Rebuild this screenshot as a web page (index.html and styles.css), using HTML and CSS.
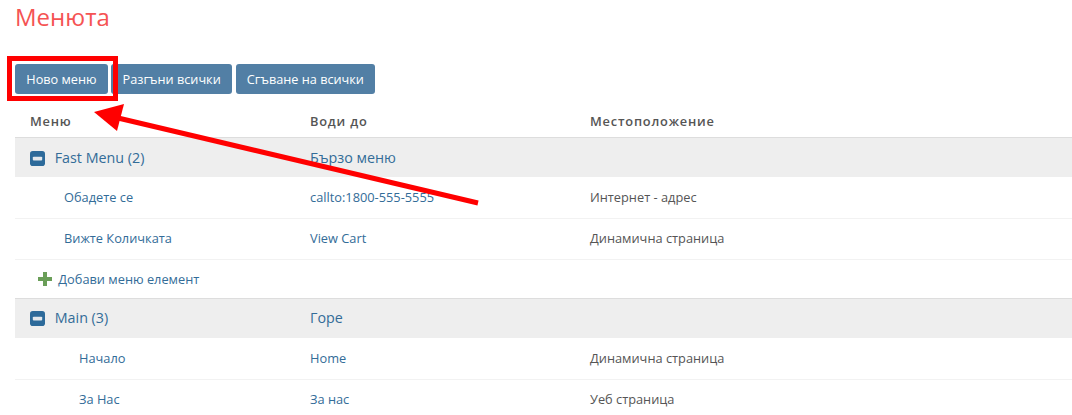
FILE: index.html
```html
<!DOCTYPE html>
<html lang="en">
<head>
    <meta charset="UTF-8">
    <title>Менюта</title>
    <link rel="stylesheet" href="styles.css">
</head>
<body>

    <div class="page">
        <h1>Менюта</h1>

        <div class="buttons">
            <a class="btn">Ново меню</a>
            <a class="btn">Разгъни всички</a>
            <a class="btn">Сгъване на всички</a>
        </div>

        <table class="menus">
            <thead>
                <tr>
                    <th class="col-name">Меню</th>
                    <th class="col-link">Води до</th>
                    <th>Местоположение</th>
                </tr>
            </thead>
            <tbody>
                <tr class="group">
                    <td>
                        <svg class="toggle" viewBox="0 0 16 16"><rect width="16" height="16" rx="3" fill="#2d6a9a"/><rect x="3" y="6" width="10" height="4" rx="1" fill="#e4e8ec"/></svg>
                        <a>Fast Menu (2)</a>
                    </td>
                    <td><a>Бързо меню</a></td>
                    <td></td>
                </tr>
                <tr>
                    <td class="indent-1"><a>Обадете се</a></td>
                    <td><a>callto:1800-555-5555</a></td>
                    <td>Интернет - адрес</td>
                </tr>
                <tr class="tight">
                    <td class="indent-1"><a>Вижте Количката</a></td>
                    <td><a>View Cart</a></td>
                    <td>Динамична страница</td>
                </tr>
                <tr class="add">
                    <td>
                        <svg class="plus" viewBox="0 0 14 14"><path d="M5 0h4v5h5v4H9v5H5V9H0V5h5z" fill="#6a9e58"/></svg>
                        <a>Добави меню елемент</a>
                    </td>
                    <td></td>
                    <td></td>
                </tr>
                <tr class="group tight">
                    <td>
                        <svg class="toggle" viewBox="0 0 16 16"><rect width="16" height="16" rx="3" fill="#2d6a9a"/><rect x="3" y="6" width="10" height="4" rx="1" fill="#e4e8ec"/></svg>
                        <a>Main (3)</a>
                    </td>
                    <td><a>Горе</a></td>
                    <td></td>
                </tr>
                <tr>
                    <td class="indent-2"><a>Начало</a></td>
                    <td><a>Home</a></td>
                    <td>Динамична страница</td>
                </tr>
                <tr class="tight">
                    <td class="indent-2"><a>За Нас</a></td>
                    <td><a>За нас</a></td>
                    <td>Уеб страница</td>
                </tr>
            </tbody>
        </table>
    </div>

    <!-- red annotation drawn over the screenshot -->
    <svg class="markup" width="1072" height="415" viewBox="0 0 1072 415">
        <rect x="9.5" y="58.5" width="106" height="40" fill="none" stroke="#f00" stroke-width="5"/>
        <line x1="478" y1="203" x2="118" y2="118" stroke="#f00" stroke-width="5"/>
        <polygon points="94,112 124,104 117,131" fill="#f00"/>
    </svg>

</body>
</html>
```

FILE: styles.css
```css
/* Basic reset */
* {
    margin: 0;
    padding: 0;
    box-sizing: border-box;
}

body {
    font-family: 'Open Sans', sans-serif;
    font-size: 12.8px;
    color: #555;
    background-color: #fff;
    overflow: hidden;
    height: 415px;
}

.page {
    padding-left: 15px;
}

h1 {
    font-size: 24px;
    font-weight: 400;
    line-height: 34px;
    color: #f55353;
}

.buttons {
    display: flex;
    gap: 3.5px;
    margin-top: 30px;
}

.btn {
    display: block;
    height: 30px;
    line-height: 30px;
    padding: 0 11.3px;
    font-size: 12.7px;
    color: #fff;
    background-color: #527fa5;
    border-radius: 3px;
}

.menus {
    width: 1057px;
    margin-top: 12px;
    border-collapse: collapse;
    table-layout: fixed;
}

.col-name,
.col-link {
    width: 280px;
}

.menus th {
    height: 31px;
    padding-left: 15px;
    text-align: left;
    font-weight: 600;
    letter-spacing: 0.8px;
    border-bottom: 1px solid #ddd;
}

.menus td {
    height: 41px;
    padding-left: 15px;
    border-bottom: 1px solid #f2f2f2;
}

.menus a {
    color: #336c98;
}

.menus .group td {
    height: 40px;
    font-size: 14.3px;
    background-color: #eee;
    border-bottom: none;
}

.tight td {
    padding-bottom: 2px;
}

.menus .add td {
    height: 39px;
    border-bottom: 1px solid #ddd;
}

.menus .indent-1 {
    padding-left: 49px;
}

.menus .indent-2 {
    padding-left: 64px;
}

.toggle {
    width: 15px;
    height: 15px;
    margin-right: 6px;
    vertical-align: -3px;
}

.plus {
    width: 14px;
    height: 14px;
    margin-left: 8px;
    margin-right: 3px;
    vertical-align: -2px;
}

.markup {
    position: absolute;
    top: 0;
    left: 0;
}
```
